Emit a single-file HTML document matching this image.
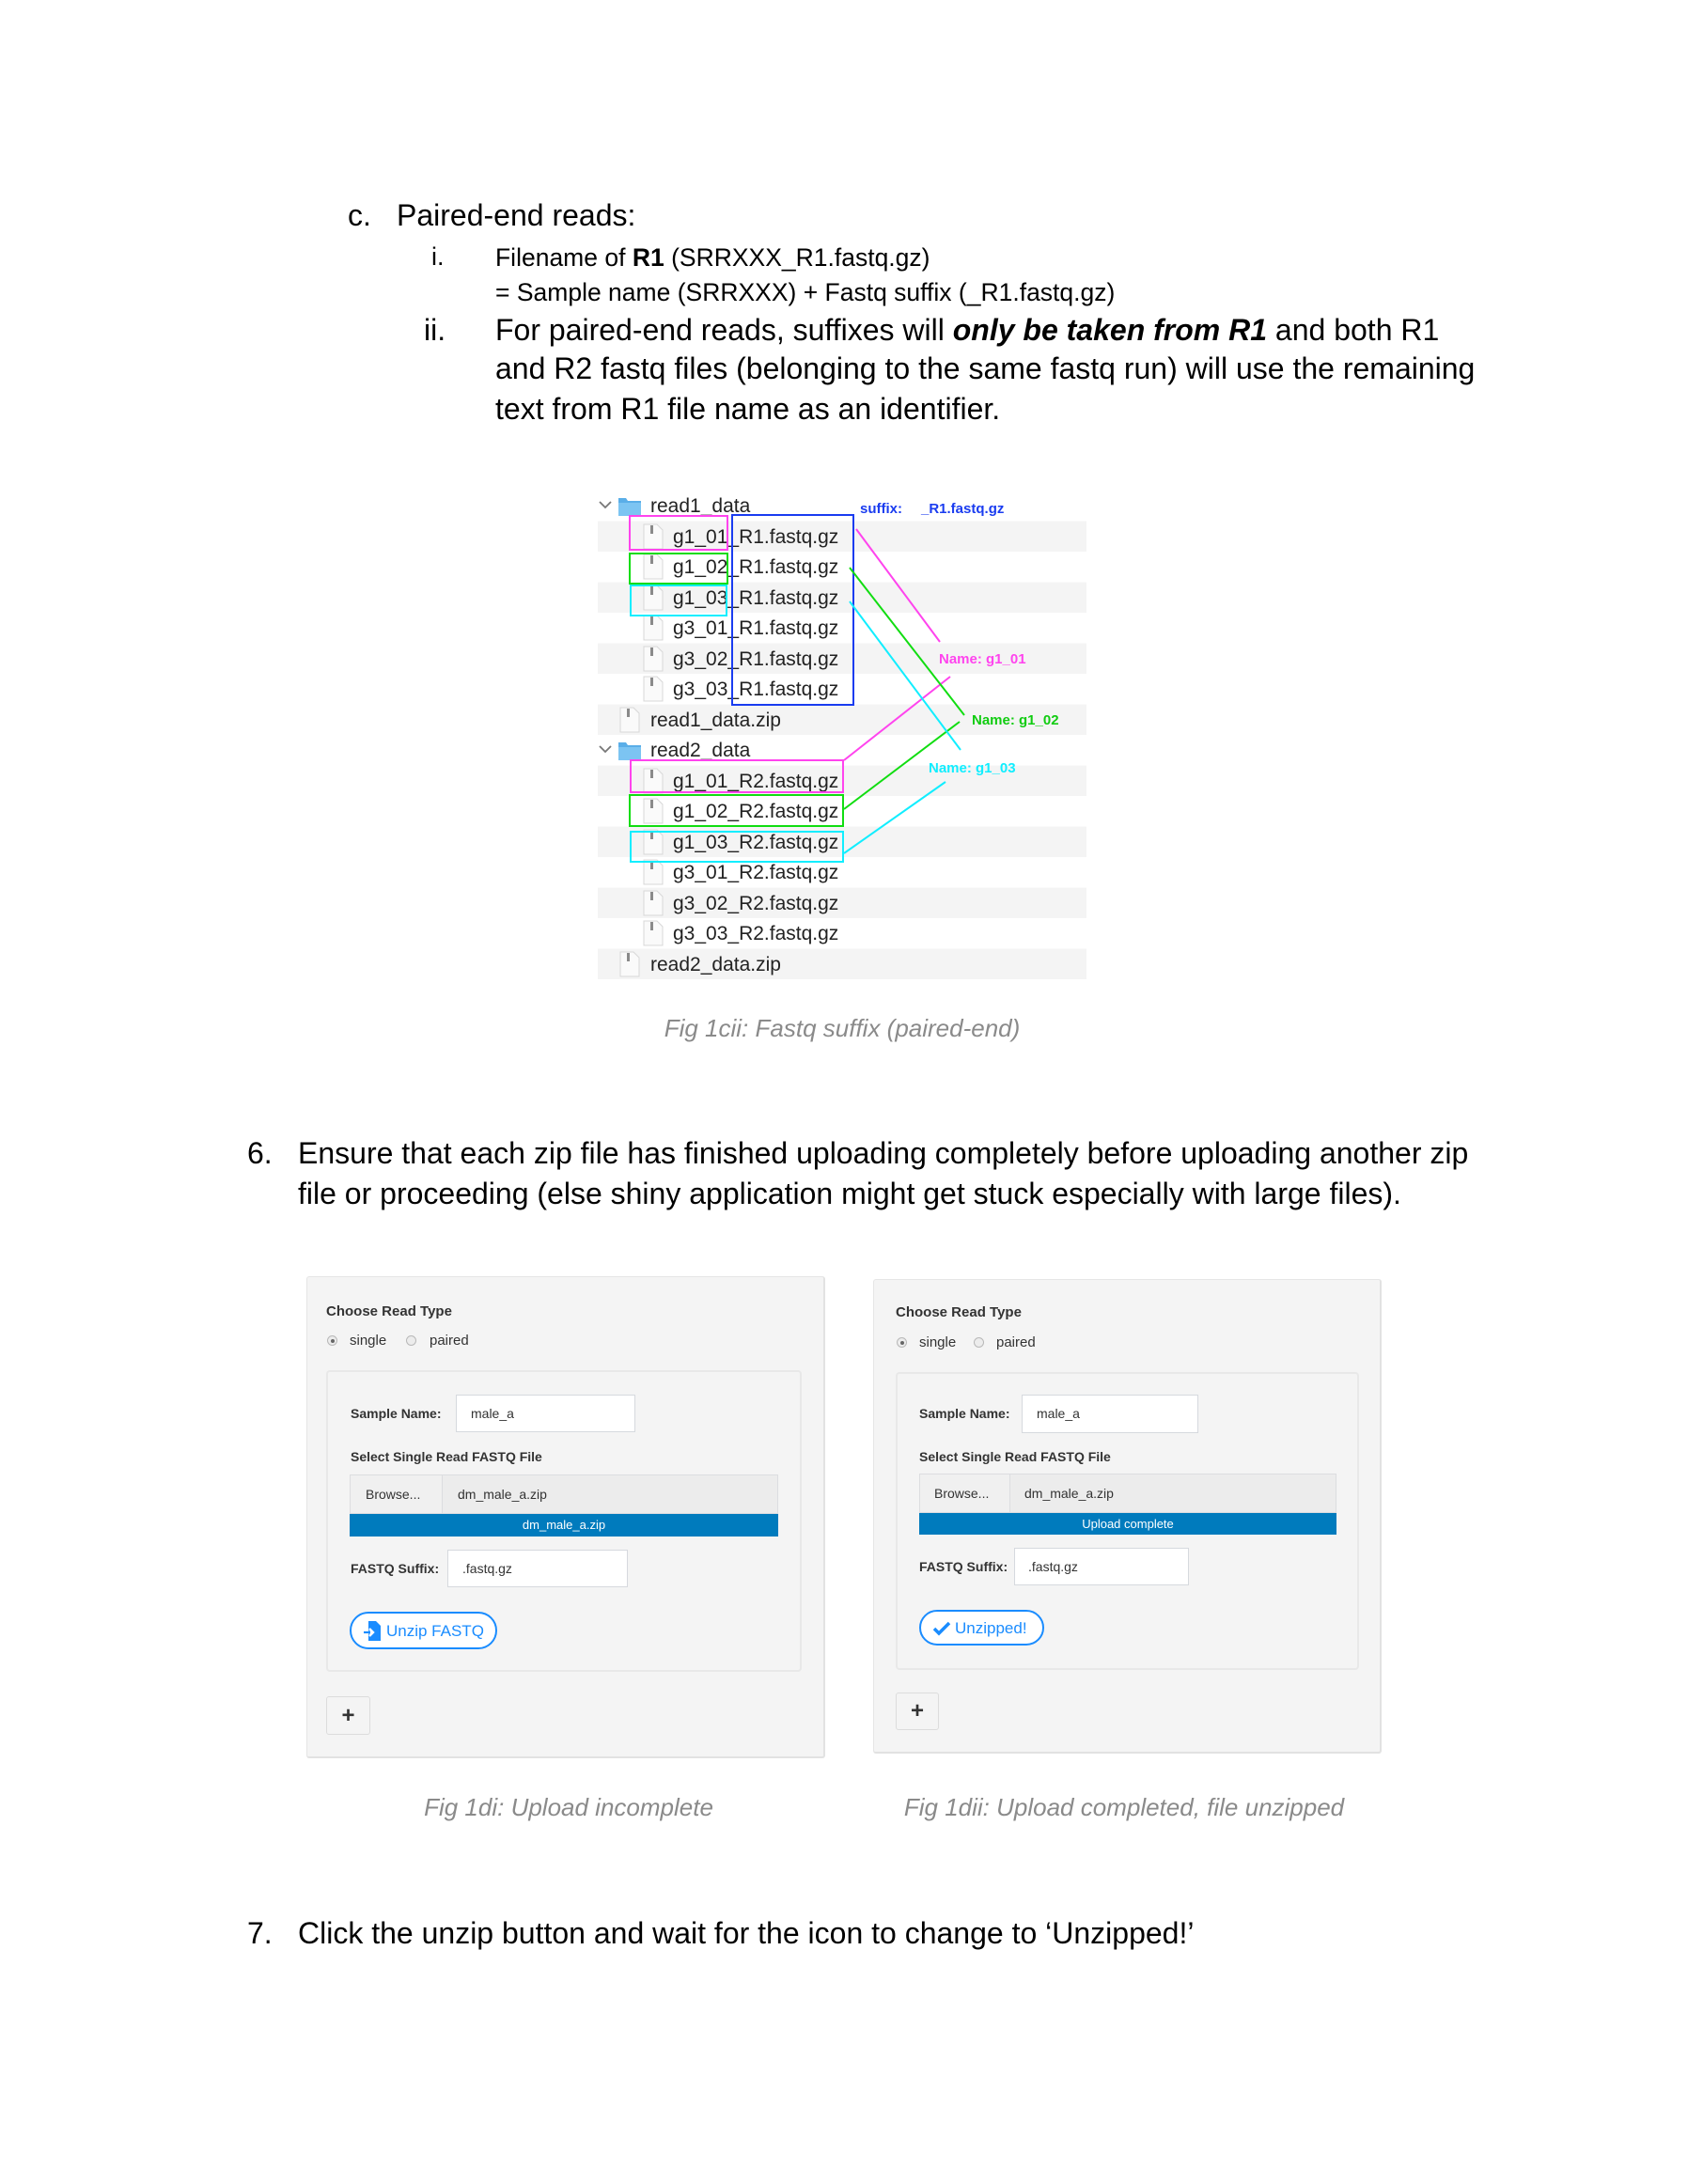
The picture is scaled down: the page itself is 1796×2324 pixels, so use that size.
<!DOCTYPE html>
<html><head><meta charset="utf-8">
<style>
html,body{margin:0;padding:0;background:#fff;}
body{width:1796px;height:2324px;position:relative;overflow:hidden;font-family:"Liberation Sans",Arial,sans-serif;color:#000;}
.t{position:absolute;white-space:nowrap;line-height:1;}
.cap{position:absolute;white-space:nowrap;font-style:italic;color:#8a8a8a;font-size:26px;line-height:1;transform:translateX(-50%);}
.panel{position:absolute;background:#f4f4f4;border:1px solid #e6e6e6;border-right:2px solid #e2e2e2;border-bottom:2px solid #e2e2e2;border-radius:3px;}
.well{position:absolute;background:#f4f4f4;border:2px solid #e8e8e8;border-radius:4px;}
.p{position:absolute;white-space:nowrap;line-height:1;color:#333;font-size:15px;}
.b{font-weight:bold;}
.inp{position:absolute;background:#fff;border:1px solid #d6d9de;box-sizing:border-box;}
.radio{position:absolute;width:11px;height:11px;border-radius:50%;border:1px solid #b8b8b8;background:#ececec;box-sizing:border-box;}
.radio.on::after{content:"";position:absolute;left:2.5px;top:2.5px;width:4px;height:4px;border-radius:50%;background:#666;}
.file{position:absolute;background:#ececec;border:1px solid #dcdde0;box-sizing:border-box;}
.bar{position:absolute;background:#007bbd;color:#fff;font-size:13px;text-align:center;}
.pill{position:absolute;border:2px solid #1a8cff;border-radius:22px;box-sizing:border-box;color:#1a8cff;background:#fff;}
.plus{position:absolute;border:1px solid #dcdcdc;border-radius:3px;background:#f4f4f4;box-sizing:border-box;text-align:center;font-size:24px;font-weight:bold;color:#333;}
</style></head><body>

<div class="t" style="left:370px;top:213px;font-size:32px;">c.</div>
<div class="t" style="left:422px;top:213px;font-size:32px;">Paired-end reads:</div>
<div class="t" style="left:459px;top:260px;font-size:27px;">i.</div>
<div class="t" style="left:527px;top:261px;font-size:26.5px;">Filename of <b>R1</b> (SRRXXX_R1.fastq.gz)</div>
<div class="t" style="left:527px;top:298px;font-size:26.5px;">= Sample name (SRRXXX) + Fastq suffix (_R1.fastq.gz)</div>
<div class="t" style="left:451px;top:335px;font-size:32px;">ii.</div>
<div class="t" style="left:527px;top:335px;font-size:32px;">For paired-end reads, suffixes will <b><i>only be taken from R1</i></b> and both R1</div>
<div class="t" style="left:527px;top:376px;font-size:32px;">and R2 fastq files (belonging to the same fastq run) will use the remaining</div>
<div class="t" style="left:527px;top:419px;font-size:32px;">text from R1 file name as an identifier.</div>

<svg style="position:absolute;left:0;top:0" width="1796" height="1100" xmlns="http://www.w3.org/2000/svg">
<defs>
<g id="doc"><path d="M0 0 H14 L20 6 V26 H0 Z" fill="#fafafa" stroke="#d8d8d8" stroke-width="1"/><rect x="7" y="1" width="3" height="9" fill="#8a8a8a"/></g>
<g id="fold"><path d="M0 3 H8 L10 6 H24 V22 H0 Z" fill="#5aaee8"/><rect x="0" y="8" width="24" height="14" fill="#7cc4f2"/></g>
</defs>
<g fill="#f4f4f4">
<rect x="636" y="554.5" width="520" height="32.5"/>
<rect x="636" y="619.5" width="520" height="32.5"/>
<rect x="636" y="684.5" width="520" height="32.5"/>
<rect x="636" y="749.5" width="520" height="32.5"/>
<rect x="636" y="814.5" width="520" height="32.5"/>
<rect x="636" y="879.5" width="520" height="32.5"/>
<rect x="636" y="944.5" width="520" height="32.5"/>
<rect x="636" y="1009.5" width="520" height="32.5"/>
</g>
<g font-family="Liberation Sans, Arial, sans-serif" font-size="21" fill="#222">
<path d="M638 534 l6 6 l6 -6" fill="none" stroke="#777" stroke-width="1.8"/>
<use href="#fold" x="658" y="527"/>
<text x="692" y="545">read1_data</text>
<use href="#doc" x="685" y="558"/><text x="716" y="578">g1_01_R1.fastq.gz</text>
<use href="#doc" x="685" y="590"/><text x="716" y="610">g1_02_R1.fastq.gz</text>
<use href="#doc" x="685" y="623"/><text x="716" y="643">g1_03_R1.fastq.gz</text>
<use href="#doc" x="685" y="655"/><text x="716" y="675">g3_01_R1.fastq.gz</text>
<use href="#doc" x="685" y="688"/><text x="716" y="708">g3_02_R1.fastq.gz</text>
<use href="#doc" x="685" y="720"/><text x="716" y="740">g3_03_R1.fastq.gz</text>
<use href="#doc" x="660" y="753"/><text x="692" y="773">read1_data.zip</text>
<path d="M638 794 l6 6 l6 -6" fill="none" stroke="#777" stroke-width="1.8"/>
<use href="#fold" x="658" y="787"/>
<text x="692" y="805">read2_data</text>
<use href="#doc" x="685" y="818"/><text x="716" y="838">g1_01_R2.fastq.gz</text>
<use href="#doc" x="685" y="850"/><text x="716" y="870">g1_02_R2.fastq.gz</text>
<use href="#doc" x="685" y="883"/><text x="716" y="903">g1_03_R2.fastq.gz</text>
<use href="#doc" x="685" y="915"/><text x="716" y="935">g3_01_R2.fastq.gz</text>
<use href="#doc" x="685" y="948"/><text x="716" y="968">g3_02_R2.fastq.gz</text>
<use href="#doc" x="685" y="980"/><text x="716" y="1000">g3_03_R2.fastq.gz</text>
<use href="#doc" x="660" y="1013"/><text x="692" y="1033">read2_data.zip</text>
</g>
<g fill="none" stroke-width="2">
<rect x="670" y="549" width="104" height="36" stroke="#ff44ee"/>
<rect x="670" y="589" width="104" height="32" stroke="#11dd11"/>
<rect x="671" y="623" width="102" height="32" stroke="#11eeff"/>
<rect x="779" y="548" width="129" height="202" stroke="#1a3cf0"/>
<rect x="671" y="809" width="226" height="34" stroke="#ff44ee"/>
<rect x="670" y="846" width="227" height="33" stroke="#11dd11"/>
<rect x="671" y="885" width="226" height="32" stroke="#11eeff"/>
<line x1="911" y1="563" x2="1000" y2="683" stroke="#ff44ee"/>
<line x1="898" y1="809" x2="1011" y2="720" stroke="#ff44ee"/>
<line x1="904" y1="604" x2="1026" y2="761" stroke="#11dd11"/>
<line x1="898" y1="861" x2="1021" y2="768" stroke="#11dd11"/>
<line x1="904" y1="640" x2="1022" y2="798" stroke="#11eeff"/>
<line x1="898" y1="908" x2="1006" y2="832" stroke="#11eeff"/>
</g>
<g font-family="Liberation Sans, Arial, sans-serif" font-size="15" font-weight="bold">
<text x="915" y="546" fill="#1a3cf0">suffix:<tspan x="980">_R1.fastq.gz</tspan></text>
<text x="999" y="706" fill="#ff44ee">Name: g1_01</text>
<text x="1034" y="771" fill="#11cc11">Name: g1_02</text>
<text x="988" y="822" fill="#11eeff">Name: g1_03</text>
</g>
</svg>

<div class="cap" style="left:896px;top:1081px;">Fig 1cii: Fastq suffix (paired-end)</div>

<div class="t" style="left:263px;top:1211px;font-size:32px;">6.</div>
<div class="t" style="left:317px;top:1211px;font-size:32px;">Ensure that each zip file has finished uploading completely before uploading another zip</div>
<div class="t" style="left:317px;top:1254px;font-size:32px;">file or proceeding (else shiny application might get stuck especially with large files).</div>

<!-- Left panel -->
<div class="panel" style="left:326px;top:1358px;width:549px;height:510px;"></div>
<div class="p b" style="left:347px;top:1388px;">Choose Read Type</div>
<div class="radio on" style="left:348px;top:1421px;"></div>
<div class="p" style="left:372px;top:1419px;">single</div>
<div class="radio" style="left:432px;top:1421px;"></div>
<div class="p" style="left:457px;top:1419px;">paired</div>
<div class="well" style="left:347px;top:1458px;width:502px;height:317px;"></div>
<div class="p b" style="left:373px;top:1497px;font-size:14px;">Sample Name:</div>
<div class="inp" style="left:485px;top:1484px;width:191px;height:40px;"></div>
<div class="p" style="left:501px;top:1497px;font-size:14px;">male_a</div>
<div class="p b" style="left:373px;top:1543px;font-size:14px;">Select Single Read FASTQ File</div>
<div class="file" style="left:372px;top:1569px;width:456px;height:42px;"></div>
<div class="file" style="left:372px;top:1569px;width:99px;height:42px;background:#f0f0f0;"></div>
<div class="p" style="left:389px;top:1583px;font-size:14px;">Browse...</div>
<div class="p" style="left:487px;top:1583px;font-size:14px;">dm_male_a.zip</div>
<div class="bar" style="left:372px;top:1611px;width:456px;height:24px;line-height:24px;">dm_male_a.zip</div>
<div class="p b" style="left:373px;top:1662px;font-size:14px;">FASTQ Suffix:</div>
<div class="inp" style="left:476px;top:1649px;width:192px;height:40px;"></div>
<div class="p" style="left:492px;top:1662px;font-size:14px;">.fastq.gz</div>
<div class="pill" style="left:372px;top:1715px;width:157px;height:40px;">
<svg style="position:absolute;left:13px;top:8px" width="20" height="22"><path d="M5 0 H13 L18 5 V21 H5 Z" fill="#1a8cff"/><path d="M0 12 H9 M6 8 L10 12 L6 16" stroke="#fff" stroke-width="2.4" fill="none"/><path d="M0 12 H7" stroke="#1a8cff" stroke-width="2.2"/></svg>
<span style="position:absolute;left:37px;top:10px;font-size:17px;line-height:1;white-space:nowrap;">Unzip FASTQ</span></div>
<div class="plus" style="left:347px;top:1805px;width:47px;height:41px;line-height:39px;">+</div>

<!-- Right panel -->
<div class="panel" style="left:929px;top:1361px;width:538px;height:502px;"></div>
<div class="p b" style="left:953px;top:1389px;">Choose Read Type</div>
<div class="radio on" style="left:954px;top:1423px;"></div>
<div class="p" style="left:978px;top:1421px;">single</div>
<div class="radio" style="left:1036px;top:1423px;"></div>
<div class="p" style="left:1060px;top:1421px;">paired</div>
<div class="well" style="left:953px;top:1460px;width:489px;height:313px;"></div>
<div class="p b" style="left:978px;top:1497px;font-size:14px;">Sample Name:</div>
<div class="inp" style="left:1087px;top:1484px;width:188px;height:41px;"></div>
<div class="p" style="left:1103px;top:1497px;font-size:14px;">male_a</div>
<div class="p b" style="left:978px;top:1543px;font-size:14px;">Select Single Read FASTQ File</div>
<div class="file" style="left:978px;top:1568px;width:444px;height:42px;"></div>
<div class="file" style="left:978px;top:1568px;width:97px;height:42px;background:#f0f0f0;"></div>
<div class="p" style="left:994px;top:1582px;font-size:14px;">Browse...</div>
<div class="p" style="left:1090px;top:1582px;font-size:14px;">dm_male_a.zip</div>
<div class="bar" style="left:978px;top:1610px;width:444px;height:23px;line-height:23px;">Upload complete</div>
<div class="p b" style="left:978px;top:1660px;font-size:14px;">FASTQ Suffix:</div>
<div class="inp" style="left:1079px;top:1647px;width:186px;height:40px;"></div>
<div class="p" style="left:1094px;top:1660px;font-size:14px;">.fastq.gz</div>
<div class="pill" style="left:978px;top:1713px;width:133px;height:38px;">
<svg style="position:absolute;left:12px;top:10px" width="20" height="16"><path d="M2 8 L7 13 L18 2" stroke="#1a8cff" stroke-width="3.5" fill="none"/></svg>
<span style="position:absolute;left:36px;top:9px;font-size:17px;line-height:1;white-space:nowrap;">Unzipped!</span></div>
<div class="plus" style="left:953px;top:1801px;width:46px;height:40px;line-height:38px;">+</div>

<div class="cap" style="left:605px;top:1910px;">Fig 1di: Upload incomplete</div>
<div class="cap" style="left:1196px;top:1910px;">Fig 1dii: Upload completed, file unzipped</div>

<div class="t" style="left:263px;top:2041px;font-size:32px;">7.</div>
<div class="t" style="left:317px;top:2041px;font-size:32px;">Click the unzip button and wait for the icon to change to ‘Unzipped!’</div>
</body></html>
